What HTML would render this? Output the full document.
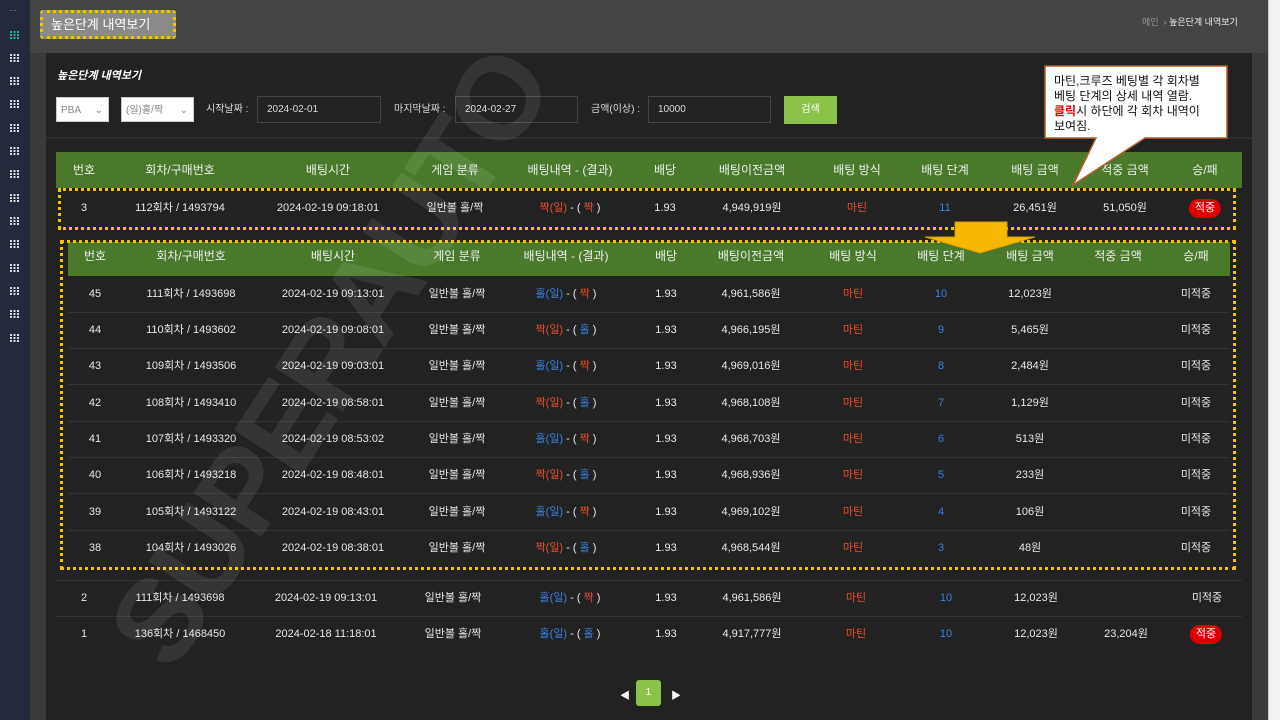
<!DOCTYPE html>
<html><head><meta charset="utf-8"><style>
*{margin:0;padding:0;box-sizing:border-box}
body{width:1280px;height:720px;overflow:hidden;background:#3b3b3b;font-family:"Liberation Sans","Noto Sans CJK KR",sans-serif;color:#e8e8e8;position:relative;font-size:11px}
.abs{position:absolute}
.side{left:0;top:0;width:30px;height:720px;background:#242a3b}
.ic{position:absolute;left:10px;width:9px;height:8px;background:
repeating-linear-gradient(90deg,#d8dce6 0 2px,transparent 2px 3.5px);}
.ic:after{content:"";position:absolute;left:0;top:2px;width:9px;height:1px;background:#242a3b;box-shadow:0 3px 0 #242a3b}
.topbar{left:30px;top:0;width:1238px;height:53px;background:#444}
.scroll{left:1268px;top:0;width:12px;height:720px;background:#f1f1f1;border-left:1px solid #ccc}
.panel{left:46px;top:53px;width:1206px;height:667px;background:#222}
.row{position:absolute;height:36px;line-height:36px}
.row span{position:absolute;transform:translateX(-50%);white-space:nowrap}
.b{color:#3a82e0}.r{color:#e8502a}
.hd{font-size:12px;color:#eee}
.badge{display:inline-block;background:#d00;color:#fff;border-radius:10px;padding:0 6px;line-height:19px;font-size:11px}
.sel{background:#fff;color:#888;height:25px;line-height:25px;padding-left:4px;font-size:10px;border:1px solid #ccc}
.inp{background:#222;border:1px solid #444;height:27px;line-height:25px;padding-left:9px;font-size:10px;color:#ddd}
.lbl{font-size:10px;color:#ddd;line-height:27px}
.sep{height:1px;background:#333}
</style></head><body>
<div class="abs side"></div>
<div class="abs" style="left:9px;top:6px;color:#aaa;font-size:8px">···</div>
<div class="ic" style="top:31px;background:repeating-linear-gradient(90deg,#2bb0a0 0 2px,transparent 2px 3.5px)"></div>
<div class="ic" style="top:54px"></div><div class="ic" style="top:77px"></div><div class="ic" style="top:100px"></div><div class="ic" style="top:124px"></div><div class="ic" style="top:147px"></div><div class="ic" style="top:170px"></div><div class="ic" style="top:194px"></div><div class="ic" style="top:217px"></div><div class="ic" style="top:240px"></div><div class="ic" style="top:264px"></div><div class="ic" style="top:287px"></div><div class="ic" style="top:310px"></div><div class="ic" style="top:334px"></div>
<div class="abs topbar"></div>
<div class="abs" style="left:40px;top:10px;width:136px;height:29px;background:#8a8a8a;border:3px dotted #f5c400;border-radius:3px;color:#fff;font-size:13px;line-height:23px;padding-left:8px">높은단계 내역보기</div>
<div class="abs" style="left:1142px;top:15px;font-size:9px;color:#999">메인 &nbsp;› <span style="color:#eee">높은단계 내역보기</span></div>
<div class="abs scroll"></div>
<div class="abs panel"></div>
<div class="abs" style="left:57px;top:67px;font-size:11px;font-weight:bold;font-style:italic;color:#fff">높은단계 내역보기</div>
<div class="abs sel" style="left:56px;top:97px;width:53px">PBA <span style="position:absolute;right:5px">⌄</span></div>
<div class="abs sel" style="left:121px;top:97px;width:73px">(일)홀/짝 <span style="position:absolute;right:5px">⌄</span></div>
<div class="abs lbl" style="left:206px;top:96px">시작날짜 :</div>
<div class="abs inp" style="left:257px;top:96px;width:124px">2024-02-01</div>
<div class="abs lbl" style="left:394px;top:96px">마지막날짜 :</div>
<div class="abs inp" style="left:455px;top:96px;width:123px">2024-02-27</div>
<div class="abs lbl" style="left:591px;top:96px">금액(이상) :</div>
<div class="abs inp" style="left:648px;top:96px;width:123px">10000</div>
<div class="abs" style="left:784px;top:96px;width:53px;height:28px;background:#8bc34a;color:#fff;font-size:10px;text-align:center;line-height:28px">검색</div>
<div class="abs sep" style="left:46px;top:137px;width:1206px;height:2px;background:#2e2e2e"></div>

<div class="abs" style="left:56px;top:152px;width:1186px;height:36px;background:#4a7a29"></div>
<div class="row hd" style="left:0;top:152px"><span style="left:84px">번호</span><span style="left:180px">회차/구매번호</span><span style="left:328px">배팅시간</span><span style="left:455px">게임 분류</span><span style="left:570px">배팅내역 - (결과)</span><span style="left:665px">배당</span><span style="left:752px">배팅이전금액</span><span style="left:857px">배팅 방식</span><span style="left:945px">배팅 단계</span><span style="left:1035px">배팅 금액</span><span style="left:1125px">적중 금액</span><span style="left:1205px">승/패</span></div>
<div class="abs" style="left:58px;top:188px;width:1178px;height:42px;border:3px dotted #f5c400"></div>
<div class="row" style="left:0;top:190px"><span style="left:84px">3</span><span style="left:180px">112회차 / 1493794</span><span style="left:328px">2024-02-19 09:18:01</span><span style="left:455px">일반볼 홀/짝</span><span style="left:570px"><font class="r">짝(일)</font> - ( <font class="r">짝</font> )</span><span style="left:665px">1.93</span><span style="left:752px">4,949,919원</span><span style="left:857px" class="r">마틴</span><span style="left:945px" class="b">11</span><span style="left:1035px">26,451원</span><span style="left:1125px">51,050원</span><span style="left:1205px"><b class="badge" style="font-weight:normal">적중</b></span></div>

<div class="abs" style="left:68px;top:242px;width:1162px;height:34px;background:#4a7a29"></div>
<div class="abs" style="left:60px;top:240px;width:1176px;height:330px;border:3px dotted #f5c400"></div>
<div class="row hd" style="left:0;top:238px"><span style="left:95px">번호</span><span style="left:191px">회차/구매번호</span><span style="left:333px">배팅시간</span><span style="left:457px">게임 분류</span><span style="left:566px">배팅내역 - (결과)</span><span style="left:666px">배당</span><span style="left:751px">배팅이전금액</span><span style="left:853px">배팅 방식</span><span style="left:941px">배팅 단계</span><span style="left:1030px">배팅 금액</span><span style="left:1118px">적중 금액</span><span style="left:1196px">승/패</span></div>
<svg class="abs" style="left:924px;top:221px" width="112" height="33"><path d="M31 1H83V16H111L56 32L1 16H31Z" fill="#f7b900" stroke="#d79c00"/></svg>

<div class="abs sep" style="left:68px;top:312px;width:1162px"></div>
<div class="abs sep" style="left:68px;top:348px;width:1162px"></div>
<div class="abs sep" style="left:68px;top:384px;width:1162px"></div>
<div class="abs sep" style="left:68px;top:421px;width:1162px"></div>
<div class="abs sep" style="left:68px;top:457px;width:1162px"></div>
<div class="abs sep" style="left:68px;top:493px;width:1162px"></div>
<div class="abs sep" style="left:68px;top:530px;width:1162px"></div>

<div class="row" style="left:0;top:276px"><span style="left:95px">45</span><span style="left:191px">111회차 / 1493698</span><span style="left:333px">2024-02-19 09:13:01</span><span style="left:457px">일반볼 홀/짝</span><span style="left:566px"><font class="b">홀(일)</font> - ( <font class="r">짝</font> )</span><span style="left:666px">1.93</span><span style="left:751px">4,961,586원</span><span style="left:853px" class="r">마틴</span><span style="left:941px" class="b">10</span><span style="left:1030px">12,023원</span><span style="left:1196px">미적중</span></div>
<div class="row" style="left:0;top:312px"><span style="left:95px">44</span><span style="left:191px">110회차 / 1493602</span><span style="left:333px">2024-02-19 09:08:01</span><span style="left:457px">일반볼 홀/짝</span><span style="left:566px"><font class="r">짝(일)</font> - ( <font class="b">홀</font> )</span><span style="left:666px">1.93</span><span style="left:751px">4,966,195원</span><span style="left:853px" class="r">마틴</span><span style="left:941px" class="b">9</span><span style="left:1030px">5,465원</span><span style="left:1196px">미적중</span></div>
<div class="row" style="left:0;top:348px"><span style="left:95px">43</span><span style="left:191px">109회차 / 1493506</span><span style="left:333px">2024-02-19 09:03:01</span><span style="left:457px">일반볼 홀/짝</span><span style="left:566px"><font class="b">홀(일)</font> - ( <font class="r">짝</font> )</span><span style="left:666px">1.93</span><span style="left:751px">4,969,016원</span><span style="left:853px" class="r">마틴</span><span style="left:941px" class="b">8</span><span style="left:1030px">2,484원</span><span style="left:1196px">미적중</span></div>
<div class="row" style="left:0;top:385px"><span style="left:95px">42</span><span style="left:191px">108회차 / 1493410</span><span style="left:333px">2024-02-19 08:58:01</span><span style="left:457px">일반볼 홀/짝</span><span style="left:566px"><font class="r">짝(일)</font> - ( <font class="b">홀</font> )</span><span style="left:666px">1.93</span><span style="left:751px">4,968,108원</span><span style="left:853px" class="r">마틴</span><span style="left:941px" class="b">7</span><span style="left:1030px">1,129원</span><span style="left:1196px">미적중</span></div>
<div class="row" style="left:0;top:421px"><span style="left:95px">41</span><span style="left:191px">107회차 / 1493320</span><span style="left:333px">2024-02-19 08:53:02</span><span style="left:457px">일반볼 홀/짝</span><span style="left:566px"><font class="b">홀(일)</font> - ( <font class="r">짝</font> )</span><span style="left:666px">1.93</span><span style="left:751px">4,968,703원</span><span style="left:853px" class="r">마틴</span><span style="left:941px" class="b">6</span><span style="left:1030px">513원</span><span style="left:1196px">미적중</span></div>
<div class="row" style="left:0;top:457px"><span style="left:95px">40</span><span style="left:191px">106회차 / 1493218</span><span style="left:333px">2024-02-19 08:48:01</span><span style="left:457px">일반볼 홀/짝</span><span style="left:566px"><font class="r">짝(일)</font> - ( <font class="b">홀</font> )</span><span style="left:666px">1.93</span><span style="left:751px">4,968,936원</span><span style="left:853px" class="r">마틴</span><span style="left:941px" class="b">5</span><span style="left:1030px">233원</span><span style="left:1196px">미적중</span></div>
<div class="row" style="left:0;top:494px"><span style="left:95px">39</span><span style="left:191px">105회차 / 1493122</span><span style="left:333px">2024-02-19 08:43:01</span><span style="left:457px">일반볼 홀/짝</span><span style="left:566px"><font class="b">홀(일)</font> - ( <font class="r">짝</font> )</span><span style="left:666px">1.93</span><span style="left:751px">4,969,102원</span><span style="left:853px" class="r">마틴</span><span style="left:941px" class="b">4</span><span style="left:1030px">106원</span><span style="left:1196px">미적중</span></div>
<div class="row" style="left:0;top:530px"><span style="left:95px">38</span><span style="left:191px">104회차 / 1493026</span><span style="left:333px">2024-02-19 08:38:01</span><span style="left:457px">일반볼 홀/짝</span><span style="left:566px"><font class="r">짝(일)</font> - ( <font class="b">홀</font> )</span><span style="left:666px">1.93</span><span style="left:751px">4,968,544원</span><span style="left:853px" class="r">마틴</span><span style="left:941px" class="b">3</span><span style="left:1030px">48원</span><span style="left:1196px">미적중</span></div>

<div class="abs sep" style="left:56px;top:580px;width:1186px"></div>
<div class="abs sep" style="left:56px;top:616px;width:1186px"></div>
<div class="row" style="left:0;top:580px"><span style="left:84px">2</span><span style="left:180px">111회차 / 1493698</span><span style="left:326px">2024-02-19 09:13:01</span><span style="left:453px">일반볼 홀/짝</span><span style="left:570px"><font class="b">홀(일)</font> - ( <font class="r">짝</font> )</span><span style="left:666px">1.93</span><span style="left:752px">4,961,586원</span><span style="left:856px" class="r">마틴</span><span style="left:946px" class="b">10</span><span style="left:1036px">12,023원</span><span style="left:1207px">미적중</span></div>
<div class="row" style="left:0;top:616px"><span style="left:84px">1</span><span style="left:180px">136회차 / 1468450</span><span style="left:326px">2024-02-18 11:18:01</span><span style="left:453px">일반볼 홀/짝</span><span style="left:570px"><font class="b">홀(일)</font> - ( <font class="b">홀</font> )</span><span style="left:666px">1.93</span><span style="left:752px">4,917,777원</span><span style="left:856px" class="r">마틴</span><span style="left:946px" class="b">10</span><span style="left:1036px">12,023원</span><span style="left:1126px">23,204원</span><span style="left:1206px"><b class="badge" style="font-weight:normal">적중</b></span></div>

<div class="abs" style="left:620px;top:687px;font-size:10px;color:#fff">◀</div>
<div class="abs" style="left:636px;top:680px;width:25px;height:26px;background:#8bc34a;border-radius:3px;color:#fff;font-size:10px;text-align:center;line-height:26px">1</div>
<div class="abs" style="left:671px;top:687px;font-size:10px;color:#fff">▶</div>

<div class="abs" style="left:-40px;top:290px;font-size:118px;font-weight:bold;color:rgba(255,255,255,0.09);transform:rotate(-57deg);transform-origin:center;white-space:nowrap;width:740px;text-align:center;letter-spacing:-4px">SUPERAUTO</div>

<svg class="abs" style="left:1044px;top:65px" width="184" height="122"><path d="M1 1H183V73H101L29 120L52 73H1Z" fill="#fff" stroke="#b45a2a" stroke-width="1.5"/></svg>
<div class="abs" style="left:1054px;top:74px;font-size:12px;line-height:15px;color:#111;white-space:nowrap">마틴,크루즈 베팅별 각 회차별<br>베팅 단계의 상세 내역 열람.<br><span style="color:#e00;font-weight:bold">클릭</span>시 하단에 각 회차 내역이<br>보여짐.</div>
</body></html>
